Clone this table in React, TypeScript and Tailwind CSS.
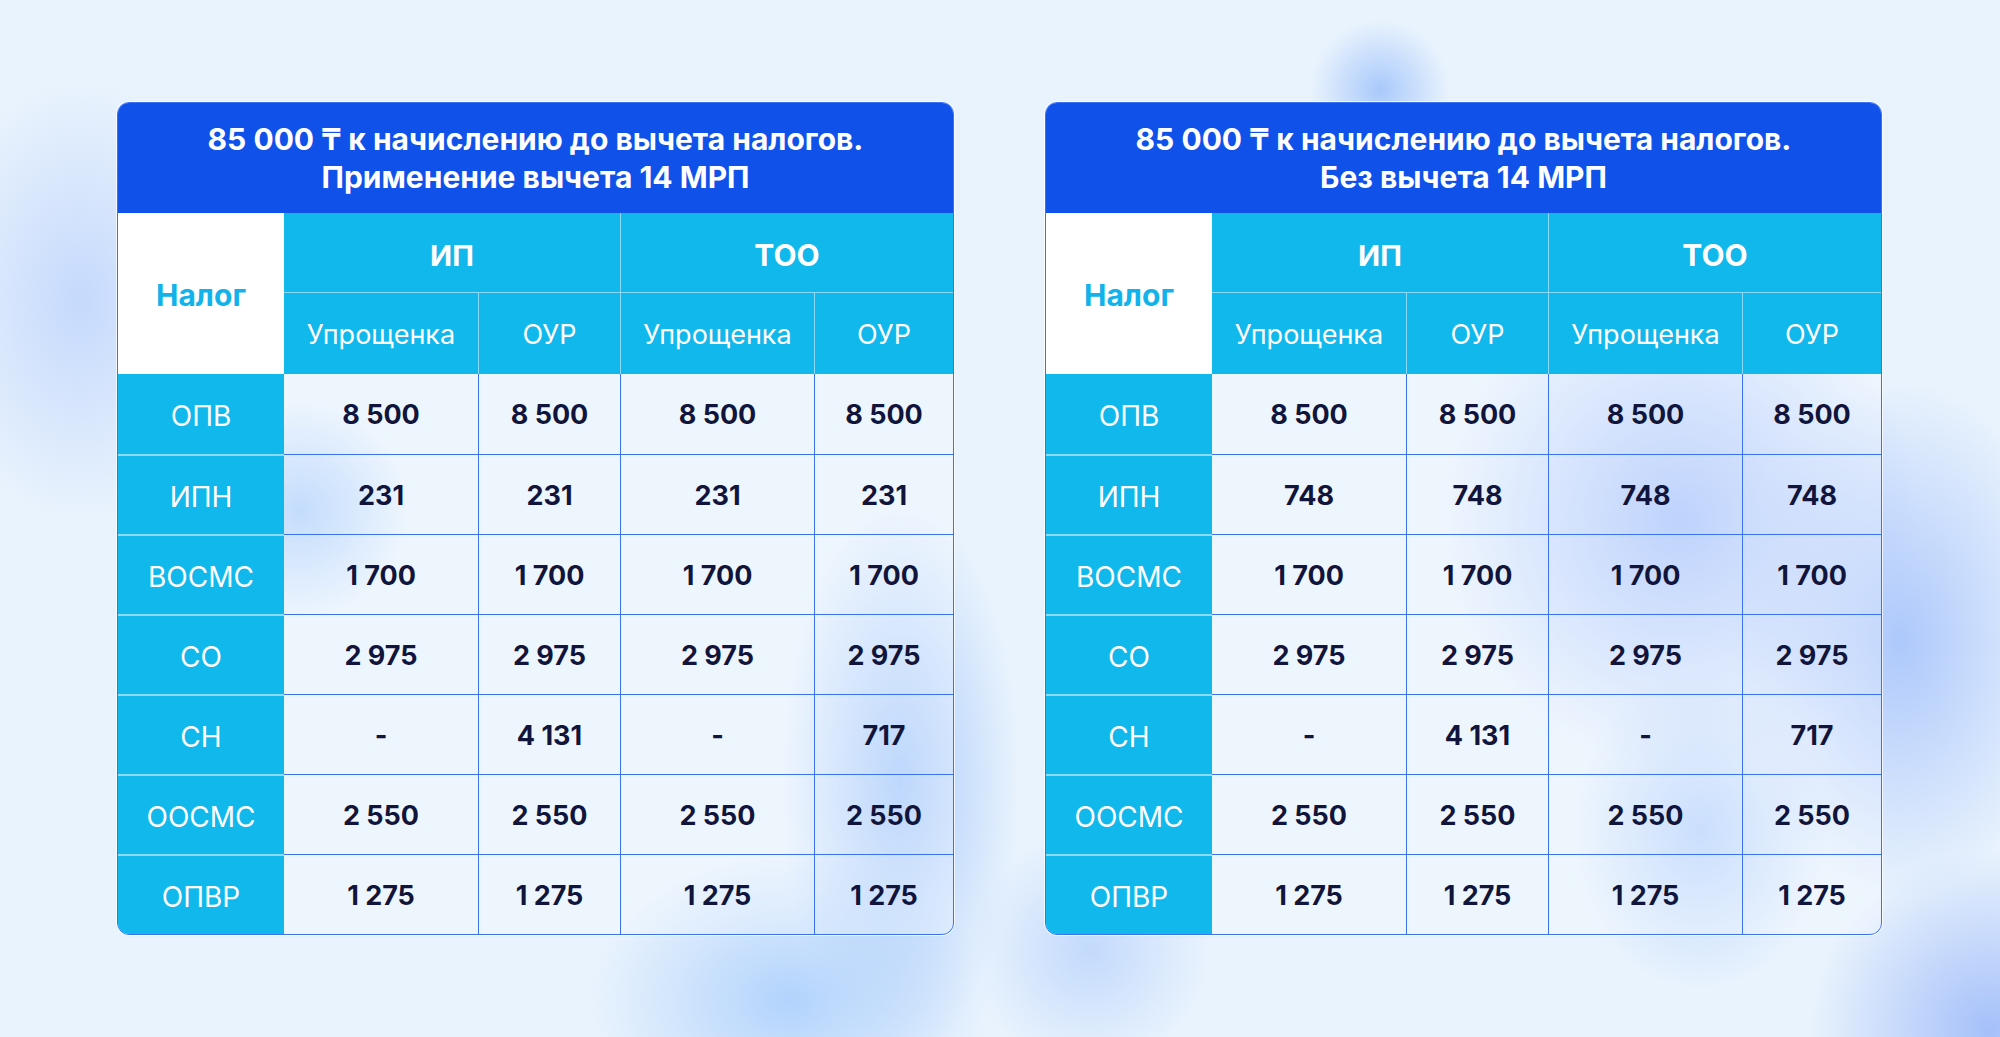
const cols = ["Упрощенка", "ОУР", "Упрощенка", "ОУР"];

type Row = { name: string; values: string[] };

const withDeduction: Row[] = [
  { name: "ОПВ", values: ["8 500", "8 500", "8 500", "8 500"] },
  { name: "ИПН", values: ["231", "231", "231", "231"] },
  { name: "ВОСМС", values: ["1 700", "1 700", "1 700", "1 700"] },
  { name: "СО", values: ["2 975", "2 975", "2 975", "2 975"] },
  { name: "СН", values: ["-", "4 131", "-", "717"] },
  { name: "ООСМС", values: ["2 550", "2 550", "2 550", "2 550"] },
  { name: "ОПВР", values: ["1 275", "1 275", "1 275", "1 275"] },
];

const withoutDeduction: Row[] = withDeduction.map((r) =>
  r.name === "ИПН" ? { ...r, values: ["748", "748", "748", "748"] } : r
);

function TaxTable({ subtitle, rows }: { subtitle: string; rows: Row[] }) {
  return (
    <div className="w-[837px] rounded-[12px] overflow-hidden border border-[#3b72f1] shadow-[0_0_0_1px_rgba(255,255,255,0.7)]">
      {/* Title */}
      <div className="h-[110px] bg-[#1052e9] flex flex-col items-center justify-center text-white text-[30px] leading-[38px] font-bold">
        <div>85 000 ₸ к начислению до вычета налогов.</div>
        <div>{subtitle}</div>
      </div>

      {/* Head */}
      <div className="grid grid-cols-[166px_194px_142px_194px_139px] grid-rows-[80px_81px] bg-[#10b8ec] text-white">
        <div className="row-span-2 bg-white flex items-center justify-center pt-[3px] text-[#12b3ea] text-[30px] font-bold">
          Налог
        </div>
        <div className="col-span-2 flex items-center justify-center pt-[6px] text-[29px] font-bold border-b border-[#8ad9f6]">
          ИП
        </div>
        <div className="col-span-2 flex items-center justify-center pt-[6px] text-[30px] font-bold border-b border-l border-[#8ad9f6]">
          ТОО
        </div>
        {cols.map((c, i) => (
          <div
            key={i}
            className={`flex items-center justify-center pt-[4px] text-[27px] font-normal ${i > 0 ? "border-l border-[#8ad9f6]" : ""}`}
          >
            {c}
          </div>
        ))}
      </div>

      {/* Body */}
      <div className="grid grid-cols-[166px_194px_142px_194px_139px] auto-rows-[80px]">
        {rows.map((r, ri) => (
          <div key={r.name} className="contents">
            <div
              className={`bg-[#10b8ec] flex items-center justify-center pt-[3px] text-white text-[28px] font-normal ${ri > 0 ? "border-t-2 border-[#8ddaf6]" : ""}`}
            >
              {r.name}
            </div>
            {r.values.map((v, vi) => (
              <div
                key={vi}
                className={`bg-white/25 flex items-center justify-center pt-[3px] text-[#12153b] text-[27px] font-bold ${vi > 0 ? "border-l-[1.5px] border-[#3b72f1]" : ""} ${ri > 0 ? "border-t-[1.5px] border-[#3b72f1]" : ""}`}
              >
                {v}
              </div>
            ))}
          </div>
        ))}
      </div>
    </div>
  );
}

export default function App() {
  return (
    <div
      className="w-full h-[1037px] overflow-hidden bg-[#e9f3fd] bg-[image:radial-gradient(circle_at_1380px_90px,#a9c9fb_0,transparent_70px),radial-gradient(ellipse_150px_220px_at_80px_300px,#c5d9fc,transparent),radial-gradient(circle_at_300px_510px,#b0d1fb_0,transparent_110px),radial-gradient(ellipse_120px_280px_at_900px_780px,#a8cafb,transparent),radial-gradient(ellipse_200px_150px_at_790px_1000px,#b2d3fc,transparent),radial-gradient(ellipse_240px_250px_at_1680px_520px,#a9c4fb,transparent),radial-gradient(ellipse_170px_260px_at_1900px_640px,#adc8fb,transparent),radial-gradient(circle_at_1990px_1030px,#a5c0fa_0,transparent_180px),radial-gradient(circle_at_1090px_950px,#c3dafc_0,transparent_120px),radial-gradient(ellipse_130px_160px_at_1700px_830px,#b9d4fc,transparent)]"
      style={{ fontFamily: "Inter, 'Noto Sans', sans-serif" }}
    >
      <div className="flex gap-[91px] pl-[117px] pt-[102px]">
        <TaxTable subtitle="Применение вычета 14 МРП" rows={withDeduction} />
        <TaxTable subtitle="Без вычета 14 МРП" rows={withoutDeduction} />
      </div>
    </div>
  );
}
